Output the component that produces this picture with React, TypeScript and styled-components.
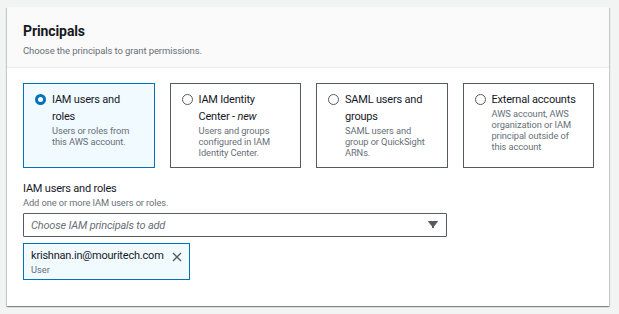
import React from 'react';
import styled, { createGlobalStyle } from 'styled-components';

const GlobalStyle = createGlobalStyle`
  html, body {
    margin: 0;
    padding: 0;
    background: #f2f3f3;
  }
  body {
    font-family: Roboto, "Noto Sans", Arial, sans-serif;
    color: #16191f;
  }
`;

const Page = styled.div`
  padding: 7px 10px 7px 7px;
`;

const Card = styled.section`
  background: #ffffff;
  box-shadow: 0 1px 1px 0 rgba(0, 28, 36, 0.3), 1px 1px 1px 0 rgba(0, 28, 36, 0.15),
    -1px 1px 1px 0 rgba(0, 28, 36, 0.15);
`;

const Header = styled.header`
  background: #fafafa;
  border-bottom: 1px solid #eaeded;
  padding: 15px 16px 0 16px;
  height: 45px;
`;

const Title = styled.h2`
  margin: 0;
  font-size: 14px;
  font-weight: 700;
  line-height: 19px;
  letter-spacing: -0.1px;
  color: #16191f;
`;

const Subtitle = styled.p`
  margin: 3px 0 0 0;
  font-size: 9.5px;
  line-height: 13px;
  letter-spacing: -0.1px;
  color: #687078;
`;

const Body = styled.div`
  padding: 15px 15px 26px 16px;
`;

const Tiles = styled.div`
  display: grid;
  grid-template-columns: repeat(4, 1fr);
  gap: 15px;
`;

const Tile = styled.label<{ selected?: boolean }>`
  display: flex;
  align-items: flex-start;
  gap: 6px;
  height: 85px;
  box-sizing: border-box;
  padding: 7px 15px 0 11px;
  border: 1px solid ${({ selected }) => (selected ? '#0073bb' : '#545b64')};
  background: ${({ selected }) => (selected ? '#f1faff' : '#ffffff')};
  cursor: pointer;
`;

const Radio = styled.span<{ checked?: boolean }>`
  flex: none;
  width: 11px;
  height: 11px;
  margin-top: 3px;
  box-sizing: border-box;
  border-radius: 50%;
  border: ${({ checked }) => (checked ? '3.5px solid #0073bb' : '1px solid #545b64')};
  background: #ffffff;
`;

const TileText = styled.div`
  display: flex;
  flex-direction: column;
`;

const TileLabel = styled.span`
  font-size: 11px;
  line-height: 17px;
  letter-spacing: -0.2px;
  color: #16191f;

  em {
    font-style: italic;
  }
`;

const TileDesc = styled.span`
  font-size: 9.3px;
  line-height: 11px;
  letter-spacing: -0.1px;
  color: #687078;
`;

const Field = styled.div`
  margin-top: 12px;
  display: flex;
  flex-direction: column;
`;

const FieldLabel = styled.span`
  font-size: 11px;
  line-height: 17px;
  letter-spacing: -0.2px;
  color: #16191f;
`;

const FieldHint = styled.span`
  font-size: 9.3px;
  line-height: 12px;
  letter-spacing: -0.1px;
  color: #687078;
`;

const Select = styled.div`
  margin-top: 4px;
  width: 424px;
  height: 24px;
  box-sizing: border-box;
  border: 1px solid #545b64;
  border-radius: 1px;
  display: flex;
  align-items: center;
  justify-content: space-between;
  padding: 0 8px 0 7px;
`;

const Placeholder = styled.span`
  font-size: 11px;
  font-style: italic;
  letter-spacing: -0.2px;
  color: #687078;
`;

const Token = styled.div`
  margin-top: 6px;
  width: 167px;
  height: 37px;
  box-sizing: border-box;
  border: 1px solid #0073bb;
  background: #f1faff;
  display: flex;
  align-items: flex-start;
  justify-content: space-between;
  padding: 3px 7px 0 7px;
`;

const TokenText = styled.div`
  display: flex;
  flex-direction: column;
`;

const TokenName = styled.span`
  font-size: 11px;
  line-height: 17px;
  letter-spacing: -0.2px;
  color: #16191f;
`;

const TokenMeta = styled.span`
  font-size: 9.3px;
  line-height: 12px;
  color: #687078;
`;

const Dismiss = styled.button`
  border: none;
  background: none;
  padding: 0;
  margin-top: 5px;
  display: flex;
  cursor: pointer;
`;

const tiles = [
  {
    label: <>IAM users and roles</>,
    desc: 'Users or roles from this AWS account.',
    selected: true,
  },
  {
    label: (
      <>
        IAM Identity Center - <em>new</em>
      </>
    ),
    desc: 'Users and groups configured in IAM Identity Center.',
  },
  {
    label: <>SAML users and groups</>,
    desc: 'SAML users and group or QuickSight ARNs.',
  },
  {
    label: <>External accounts</>,
    desc: 'AWS account, AWS organization or IAM principal outside of this account',
  },
];

const App: React.FC = () => {
  return (
    <>
      <GlobalStyle />
      <Page>
        <Card>
          <Header>
            <Title>Principals</Title>
            <Subtitle>Choose the principals to grant permissions.</Subtitle>
          </Header>
          <Body>
            <Tiles>
              {tiles.map((t, i) => (
                <Tile key={i} selected={t.selected}>
                  <Radio checked={t.selected} />
                  <TileText>
                    <TileLabel>{t.label}</TileLabel>
                    <TileDesc>{t.desc}</TileDesc>
                  </TileText>
                </Tile>
              ))}
            </Tiles>

            <Field>
              <FieldLabel>IAM users and roles</FieldLabel>
              <FieldHint>Add one or more IAM users or roles.</FieldHint>
              <Select>
                <Placeholder>Choose IAM principals to add</Placeholder>
                <svg width="10" height="8" viewBox="0 0 10 8">
                  <path d="M0.5 0.5h9L5 6z" fill="#545b64" stroke="#545b64" strokeLinejoin="round" />
                  <rect x="4" y="5" width="2" height="2" fill="#545b64" />
                </svg>
              </Select>
              <Token>
                <TokenText>
                  <TokenName>krishnan.in@mouritech.com</TokenName>
                  <TokenMeta>User</TokenMeta>
                </TokenText>
                <Dismiss aria-label="Remove">
                  <svg width="10" height="10" viewBox="0 0 10 10">
                    <path d="M1 1l8 8M9 1l-8 8" stroke="#545b64" strokeWidth="1.4" />
                  </svg>
                </Dismiss>
              </Token>
            </Field>
          </Body>
        </Card>
      </Page>
    </>
  );
};

export default App;
